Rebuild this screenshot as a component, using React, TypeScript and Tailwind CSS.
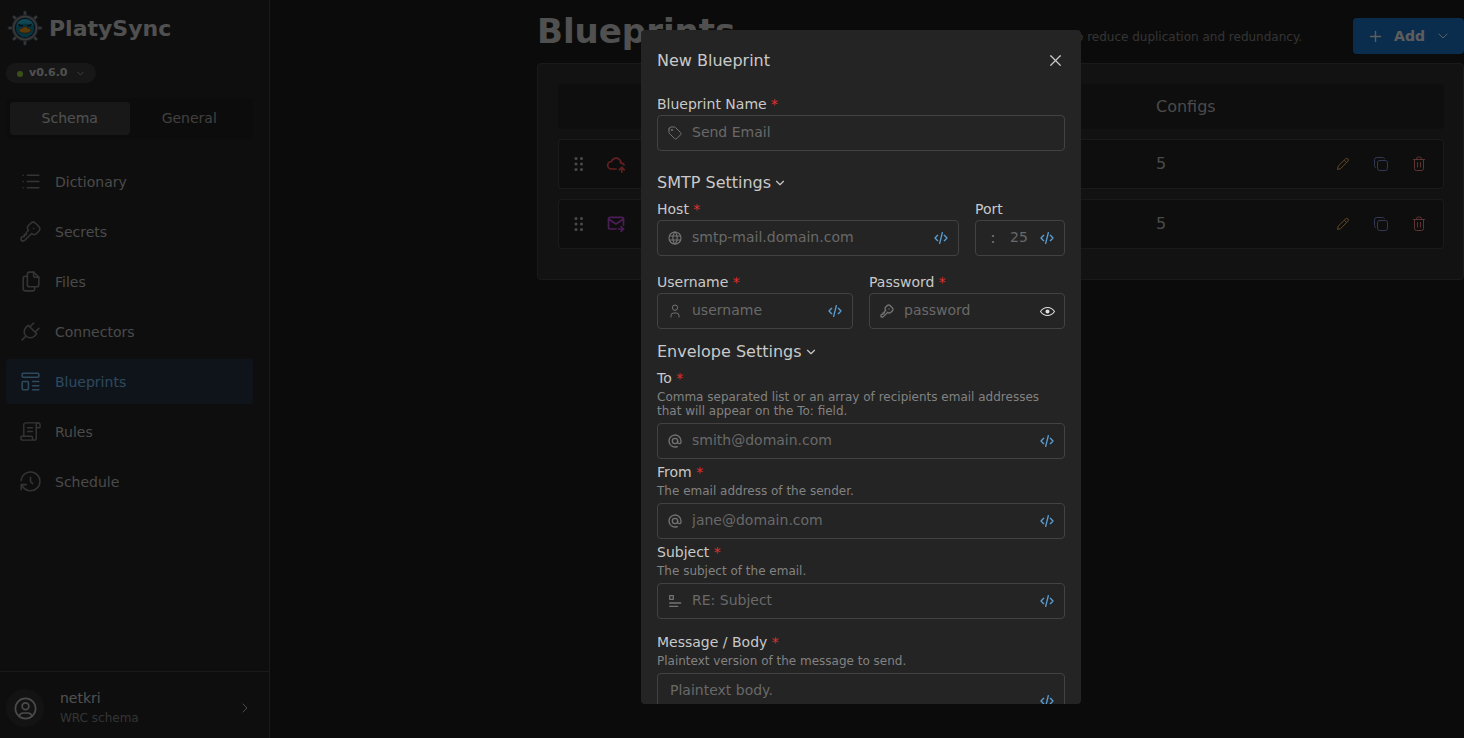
import React from "react";
import { ScrollText } from "lucide-react";
import {
  TbAt,
  TbChevronDown,
  TbChevronRight,
  TbCloudUp,
  TbCode,
  TbFiles,
  TbHistory,
  TbKey,
  TbList,
  TbMailForward,
  TbPlug,
  TbPlus,
  TbTag,
  TbTemplate,
  TbUser,
  TbUserCircle,
  TbWorld,
  TbX,
} from "react-icons/tb";

function Logo() {
  const spokes = [0, 45, 90, 135, 180, 225, 270, 315];
  return (
    <svg width="36" height="36" viewBox="0 0 36 36" aria-hidden="true">
      {spokes.map((angle) => (
        <g key={angle} transform={`rotate(${angle} 18 18)`}>
          <path d="M15 6.500 Q16.800 5.500 16.600 3.600 Q16.200 0.800 18 0.800 Q19.800 0.800 19.400 3.600 Q19.200 5.500 21 6.500 Z" fill="#8a8c8e" stroke="#3d4a55" strokeWidth="0.600" />
        </g>
      ))}
      <circle cx="18" cy="18" r="13" fill="#75797c" stroke="#3d4a55" strokeWidth="0.800" />
      <circle cx="18" cy="18" r="11.600" fill="none" stroke="#9a9c9e" strokeWidth="0.800" />
      <circle cx="18" cy="18" r="10.200" fill="#0c2c3c" />
      <circle cx="18" cy="18" r="9.200" fill="#127f9f" />
      <path d="M9.500 15.500a8.800 8.800 0 0 1 17 0c-4-2.800-13-2.800-17 0z" fill="#2bb0cf" />
      <path d="M12 14.300q1.300 2.200 3.400 1.200M20.600 15.500q2.100 1 3.400-1.200" fill="none" stroke="#082432" strokeWidth="1.400" strokeLinecap="round" />
      <path d="M12.200 19.600c1.400-1.800 3.200-.8 4.200-2.400q1.600-1.300 3.200 0c1 1.600 2.800.6 4.200 2.400.6 2.400-2.900 3.400-5.800 3.400s-6.400-1-5.800-3.400z" fill="#e8921a" stroke="#6a3a05" strokeWidth="0.600" />
    </svg>
  );
}

function GripIcon() {
  return (
    <svg width="10" height="16" viewBox="0 0 10 16" fill="currentColor" aria-hidden="true">
      {[2.5, 8, 13.5].map((y) => (
        <g key={y}>
          <circle cx="2" cy={y} r="1.5" />
          <circle cx="7.5" cy={y} r="1.5" />
        </g>
      ))}
    </svg>
  );
}

function PencilIcon() {
  return (
    <svg width="18" height="18" viewBox="0 0 18 18" fill="none" stroke="currentColor" strokeLinejoin="round" aria-hidden="true">
      <path d="M3.500 14.500l.7-3.400 7.400-7.200a1.600 1.600 0 0 1 2.300 2.300l-7.300 7.400zM10.300 5.200l2.400 2.400" />
    </svg>
  );
}

function CopyIcon() {
  return (
    <svg width="18" height="18" viewBox="0 0 18 18" fill="none" stroke="currentColor" strokeLinecap="round" aria-hidden="true">
      <rect x="5.500" y="5.500" width="10" height="10" rx="2.200" />
      <path d="M3.600 12.500a2.200 2.200 0 0 1-1.100-2V4.700a2.200 2.200 0 0 1 2.200-2.200h5.800a2.200 2.200 0 0 1 2 1.100" />
    </svg>
  );
}

function TrashIcon() {
  return (
    <svg width="18" height="18" viewBox="0 0 18 18" fill="none" stroke="currentColor" strokeLinecap="round" strokeLinejoin="round" aria-hidden="true">
      <path d="M3.500 4.500h11M6.500 4.500v-.6q0-1.900 1.900-1.900h1.200q1.900 0 1.900 1.900v.6M4.500 4.500v9q0 2 2 2h5q2 0 2-2v-9M7.500 7.500v4.500M10.500 7.500v4.500" />
    </svg>
  );
}

function SubjectIcon() {
  return (
    <svg width="16" height="16" viewBox="0 0 16 16" fill="none" stroke="currentColor" strokeWidth="1.300" strokeLinecap="round" strokeLinejoin="round" aria-hidden="true">
      <path d="M2.700 2.700h3.600v3.600h-3.600zM2.700 10h11M2.700 13.300h8" />
    </svg>
  );
}

function EyeIcon() {
  return (
    <svg width="15" height="15" viewBox="0 0 15 15" fill="currentColor" fillRule="evenodd" aria-hidden="true">
      <path d="M7.5 11C4.80285 11 2.52952 9.62184 1.09622 7.50001C2.52952 5.37816 4.80285 4 7.5 4C10.1971 4 12.4705 5.37816 13.9038 7.50001C12.4705 9.62183 10.1971 11 7.5 11ZM7.5 3C4.30786 3 1.65639 4.70638 0.0760002 7.23501C-0.0253338 7.39715 -0.0253334 7.60288 0.0760014 7.76501C1.65639 10.2936 4.30786 12 7.5 12C10.6921 12 13.3436 10.2936 14.924 7.76501C15.0253 7.60288 15.0253 7.39715 14.924 7.23501C13.3436 4.70638 10.6921 3 7.5 3ZM7.5 9.5C8.60457 9.5 9.5 8.60457 9.5 7.5C9.5 6.39543 8.60457 5.5 7.5 5.5C6.39543 5.5 5.5 6.39543 5.5 7.5C5.5 8.60457 6.39543 9.5 7.5 9.5Z" />
    </svg>
  );
}

function RulesIcon({ className = "" }: { className?: string }) {
  return (
    <span className={`flex size-[25px] items-center justify-center ${className}`}>
      <ScrollText size={23} strokeWidth={1.5} className="-scale-x-100" />
    </span>
  );
}

type NavIcon = React.ComponentType<{ size?: number; strokeWidth?: number; className?: string }>;

const navItems: { label: string; icon: NavIcon; active?: boolean }[] = [
  { label: "Dictionary", icon: TbList },
  { label: "Secrets", icon: TbKey },
  { label: "Files", icon: TbFiles },
  { label: "Connectors", icon: TbPlug },
  { label: "Blueprints", icon: TbTemplate, active: true },
  { label: "Rules", icon: RulesIcon },
  { label: "Schedule", icon: TbHistory },
];

function Sidebar() {
  return (
    <aside className="flex w-[270px] shrink-0 flex-col border-r border-[#424242] bg-[#242424]">
      <div className="flex h-14 items-center gap-1.5 pl-[7px]">
        <Logo />
        <span className="text-[22px] font-bold text-[#c9c9c9]">PlatySync</span>
      </div>
      <button type="button" className="ml-1.5 mt-[7px] flex h-5 w-[90px] items-center rounded-full bg-[#3b3b3b] pl-[11px] pt-px text-[11px] font-bold text-[#c9c9c9]">
        <span className="mr-1.5 size-1.5 rounded-full bg-[#94c83d]" />
        v0.6.0
        <TbChevronDown size={11} strokeWidth={1.5} className="ml-[7px]" />
      </button>
      <div className="ml-1.5 mr-4 mt-[15px] flex h-[41px] rounded bg-[#1f1f1f] p-1 text-sm">
        <button type="button" className="flex-1 rounded bg-[#3e3e3e] pb-0.5 text-[#c9c9c9]">Schema</button>
        <button type="button" className="flex-1 pb-0.5 text-[#a0a0a0]">General</button>
      </div>
      <nav className="ml-1.5 mr-4 mt-5 flex flex-col gap-[5px] text-sm">
        {navItems.map(({ label, icon: Icon, active }) => (
          <a
            key={label}
            href="#"
            className={
              active
                ? "flex h-[45px] items-center gap-3 rounded bg-[#233442] px-3 text-[#74b4e8]"
                : "flex h-[45px] items-center gap-3 rounded px-3 text-[#b8b8b8]"
            }
          >
            <Icon size={25} strokeWidth={1.5} className={active ? "text-[#74b4e8]" : "text-[#828282]"} />
            {label}
          </a>
        ))}
      </nav>
      <button type="button" className="mt-auto flex h-[67px] items-center border-t border-[#424242] pl-1.5 pr-4 pt-1.5 text-left">
        <span className="flex size-[38px] items-center justify-center rounded-full bg-[#303030] text-[#b8b8b8]">
          <TbUserCircle size={27} strokeWidth={1.5} />
        </span>
        <span className="ml-4 flex flex-1 flex-col">
          <span className="text-sm text-[#c9c9c9]">netkri</span>
          <span className="text-xs leading-5 text-[#828282]">WRC schema</span>
        </span>
        <TbChevronRight size={16} strokeWidth={1.5} className="text-[#b8b8b8]" />
      </button>
    </aside>
  );
}

const blueprints = [
  { id: 1, icon: TbCloudUp, tone: "text-[#fa5252]", configs: 5 },
  { id: 2, icon: TbMailForward, tone: "text-[#be4bdb]", configs: 5 },
];

function BlueprintTable() {
  return (
    <div className="rounded border border-[#424242] bg-[#2e2e2e] pb-5 pl-5 pr-[19px] pt-2.5">
      <table className="w-full table-fixed border-separate border-spacing-x-0 border-spacing-y-2.5 text-left text-base text-[#b8b8b8]">
        <thead>
          <tr className="h-[45px]">
            <th className="w-10 rounded-l bg-[#242424]" />
            <th className="bg-[#242424]" />
            <th className="w-44 bg-[#242424] p-0 font-normal">Configs</th>
            <th className="w-28 rounded-r bg-[#242424]" />
          </tr>
        </thead>
        <tbody>
          {blueprints.map(({ id, icon: Icon, tone, configs }) => (
            <tr key={id} className="h-[50px]">
              <td className="rounded-l border-y border-l border-[#424242] bg-[#242424] p-0 pl-[15px]">
                <button type="button" aria-label="Reorder" className="block text-[#b8b8b8]"><GripIcon /></button>
              </td>
              <td className="border-y border-[#424242] bg-[#242424] p-0 pl-2">
                <Icon size={20} className={tone} />
              </td>
              <td className="border-y border-[#424242] bg-[#242424] p-0">{configs}</td>
              <td className="rounded-r border-y border-r border-[#424242] bg-[#242424] p-0">
                <div className="flex justify-end gap-5 pr-[15px]">
                  <button type="button" aria-label="Edit" className="text-[#f0b45a]"><PencilIcon /></button>
                  <button type="button" aria-label="Duplicate" className="text-[#7f8fd0]"><CopyIcon /></button>
                  <button type="button" aria-label="Delete" className="text-[#f08080]"><TrashIcon /></button>
                </div>
              </td>
            </tr>
          ))}
        </tbody>
      </table>
    </div>
  );
}

type FieldProps = {
  id: string;
  label: string;
  placeholder: string;
  icon: React.ReactNode;
  required?: boolean;
  description?: string;
  type?: string;
  action?: "code" | "eye" | "none";
  className?: string;
};

function FieldLabel({ id, label, required, description }: { id: string; label: string; required?: boolean; description?: string }) {
  return (
    <>
      <label htmlFor={id} className="block text-sm leading-[22px] text-[#c9c9c9]">
        {label}
        {required && <span className="text-[#e03131]"> *</span>}
      </label>
      {description && <p className="mb-[5px] mt-px text-xs leading-[14px] text-[#828282]">{description}</p>}
    </>
  );
}

function Field({ id, label, placeholder, icon, required, description, type = "text", action = "code", className = "" }: FieldProps) {
  return (
    <div className={className}>
      <FieldLabel id={id} label={label} required={required} description={description} />
      <div className="flex h-9 items-center rounded border border-[#424242] bg-[#242424]">
        <span className="flex w-[34px] shrink-0 justify-center text-[#737373]">{icon}</span>
        <input
          id={id}
          type={type}
          placeholder={placeholder}
          className="h-full w-0 min-w-0 flex-1 bg-transparent pb-0.5 text-sm text-[#c9c9c9] outline-none placeholder:text-[#696969]"
        />
        {action === "code" && (
          <button type="button" aria-label="Insert expression" className="flex w-[34px] shrink-0 justify-center text-[#5a9fd4]">
            <TbCode size={16} />
          </button>
        )}
        {action === "eye" && (
          <button type="button" aria-label="Show password" className="flex w-[34px] shrink-0 justify-center text-[#e0e0e0]">
            <EyeIcon />
          </button>
        )}
      </div>
    </div>
  );
}

function SectionToggle({ title, className }: { title: string; className: string }) {
  return (
    <button type="button" className={`mb-[3px] flex h-6 items-center gap-0.5 text-base text-[#c9c9c9] ${className}`}>
      {title}
      <TbChevronDown size={14} />
    </button>
  );
}

function BlueprintModal() {
  return (
    <div className="fixed inset-0 flex items-start justify-center bg-black/60 pl-[258px] pt-[30px]">
      <section
        role="dialog"
        aria-modal="true"
        aria-labelledby="modal-title"
        className="max-h-[calc(100vh-64px)] w-[440px] overflow-y-auto rounded bg-[#242424] px-4 pb-4 [scrollbar-width:none]"
      >
        <header className="flex h-[60px] items-center justify-between text-[#c9c9c9]">
          <h2 id="modal-title" className="pt-0.5 text-base">New Blueprint</h2>
          <button type="button" aria-label="Close"><TbX size={19} strokeWidth={1.5} /></button>
        </header>
        <form className="pt-[3px]">
          <Field id="name" label="Blueprint Name" required placeholder="Send Email" icon={<TbTag size={16} strokeWidth={1.5} />} action="none" />

          <SectionToggle title="SMTP Settings" className="mt-5" />
          <div className="flex gap-4">
            <Field id="host" label="Host" required placeholder="smtp-mail.domain.com" icon={<TbWorld size={16} strokeWidth={1.75} />} className="flex-1" />
            <Field id="port" label="Port" placeholder="25" icon={<span className="text-base">:</span>} className="w-[90px]" />
          </div>
          <div className="mt-[15px] flex gap-4">
            <Field id="username" label="Username" required placeholder="username" icon={<TbUser size={16} strokeWidth={1.5} />} className="flex-1" />
            <Field id="password" label="Password" required type="password" placeholder="password" icon={<TbKey size={16} />} action="eye" className="flex-1" />
          </div>

          <SectionToggle title="Envelope Settings" className="mt-[11px]" />
          <div className="flex flex-col gap-0.5">
            <Field id="to" label="To" required description="Comma separated list or an array of recipients email addresses that will appear on the To: field." placeholder="smith@domain.com" icon={<TbAt size={16} />} />
            <Field id="from" label="From" required description="The email address of the sender." placeholder="jane@domain.com" icon={<TbAt size={16} />} />
            <Field id="subject" label="Subject" required description="The subject of the email." placeholder="RE: Subject" icon={<SubjectIcon />} />
          </div>
          <div className="mt-3">
            <FieldLabel id="message" label="Message / Body" required description="Plaintext version of the message to send." />
            <div className="flex h-14 items-center rounded border border-[#424242]">
              <textarea
                id="message"
                placeholder="Plaintext body."
                className="h-full flex-1 resize-none bg-transparent pl-3 pt-1.5 text-sm text-[#c9c9c9] outline-none placeholder:text-[#696969]"
              />
              <button type="button" aria-label="Insert expression" className="flex w-[34px] justify-center text-[#5a9fd4]">
                <TbCode size={16} />
              </button>
            </div>
          </div>
        </form>
      </section>
    </div>
  );
}

export default function App() {
  return (
    <div className="flex h-screen overflow-hidden bg-[#1d1d1d] font-['DejaVu_Sans',sans-serif]">
      <Sidebar />
      <main className="min-w-0 flex-1 pl-[267px]">
        <header className="flex h-[63px] items-center">
          <h1 className="text-[34px] font-bold text-[#c9c9c9]">Blueprints</h1>
          <p className="ml-auto mr-[51px] pt-2.5 text-xs text-[#828282]">to reduce duplication and redundancy.</p>
          <button type="button" className="mt-[9px] flex h-9 items-center rounded bg-[#1971c2] pl-3.5 pr-[13px] text-sm font-bold text-[#e9e9e9]">
            <TbPlus size={17} strokeWidth={2} />
            <span className="mx-2.5">Add</span>
            <TbChevronDown size={16} strokeWidth={1.5} />
          </button>
        </header>
        <BlueprintTable />
      </main>
      <BlueprintModal />
    </div>
  );
}
